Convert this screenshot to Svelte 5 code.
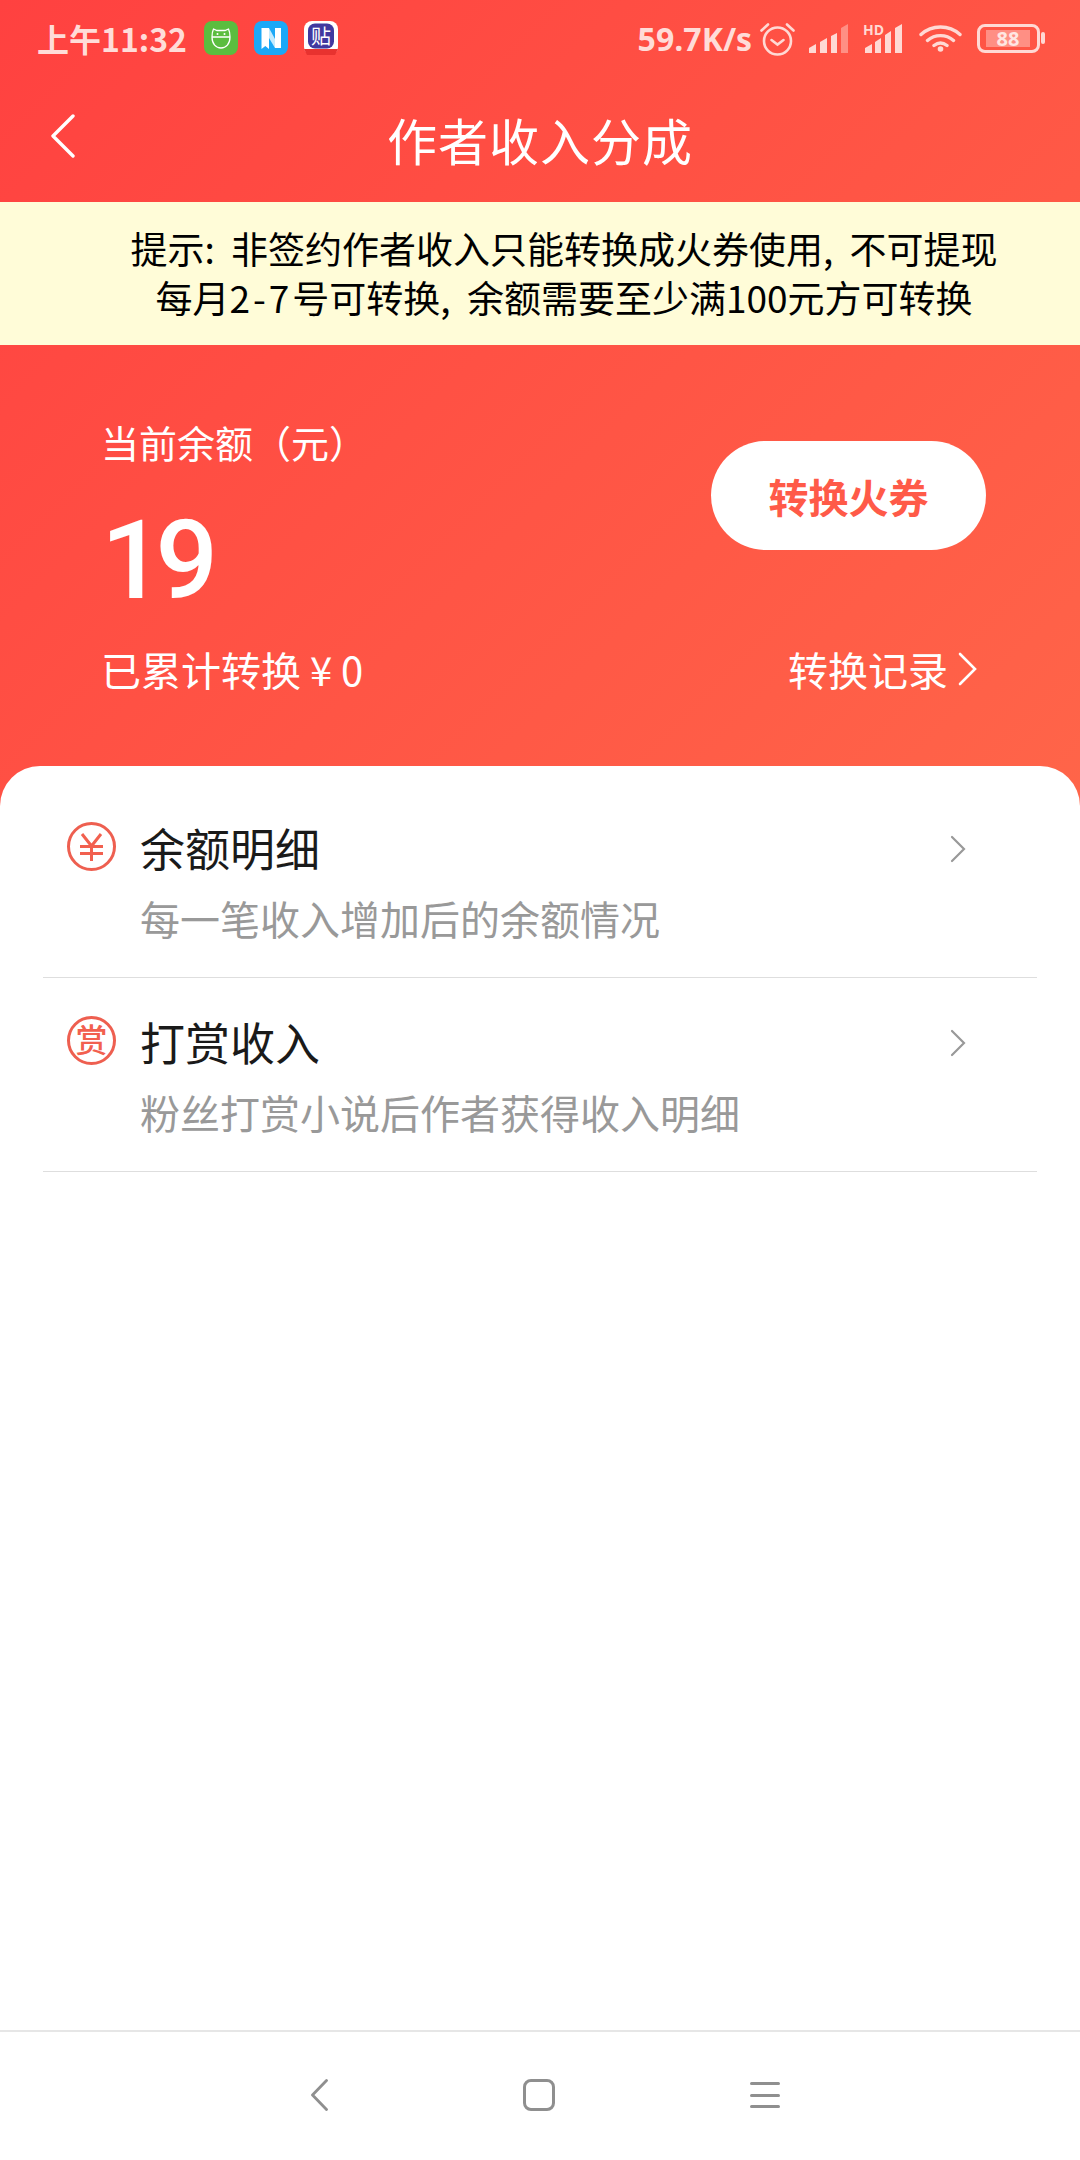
<script>
  const rows = [
    { title: '余额明细', sub: '每一笔收入增加后的余额情况', kind: 'yuan' },
    { title: '打赏收入', sub: '粉丝打赏小说后作者获得收入明细', kind: 'reward' }
  ];
</script>

<div class="page">
  <div class="top">
    <div class="status">
      <div class="status-left">
        <span class="time">上午11:32</span>
        <svg class="app-icon" viewBox="0 0 34 34">
          <rect width="34" height="34" rx="8" fill="#5bbd3f" />
          <path d="M8 16h18M8 16c0 7 4 11 9 11s9-4 9-11c0-3-.5-6-1.500-8l-3.500 1.500h-8L9.500 8C8.500 10 8 13 8 16z" fill="none" stroke="#fff" stroke-width="1.300" />
          <circle cx="13.500" cy="13" r="1" fill="#fff" />
          <circle cx="20.500" cy="13" r="1" fill="#fff" />
        </svg>
        <svg class="app-icon" viewBox="0 0 34 34">
          <rect width="34" height="34" rx="8" fill="#1ba8f7" />
          <path d="M15 7l6 11v9l-6-10z" fill="#c4eafd" />
          <path d="M7.500 7H15v21l-3.700-3-3.800 3z" fill="#fff" />
          <path d="M21 7h6v20h-6z" fill="#fff" />
        </svg>
        <svg class="app-icon" viewBox="0 0 34 34">
          <rect width="34" height="34" rx="8" fill="#fff" />
          <rect x="4" y="2.500" width="26" height="25" rx="7" fill="#41389f" />
          <path d="M0 28h34l-3 6H3z" fill="#e8322f" />
          <text x="17" y="22.500" text-anchor="middle" class="tie">贴</text>
        </svg>
      </div>
      <div class="status-right">
        <span class="speed">59.7K/s</span>
        <svg class="alarm" viewBox="0 0 35 35">
          <circle cx="17.500" cy="20" r="13.500" fill="none" stroke="#ffd9d4" stroke-width="2.600" />
          <path d="M11.500 19l6 4.500 6-4.500M1.500 9.500L8 3.500M33.500 9.500L27 3.500" fill="none" stroke="#ffd9d4" stroke-width="2.600" stroke-linecap="round" />
        </svg>
        <svg class="signal" viewBox="0 0 40 30">
          <path d="M0 30v-5l7-4v9zM11 30V19l7-4v15zM22 30V13l6-3v20z" fill="#ffd9d4" />
          <path d="M32 30V5l7-4v29z" fill="#ff8f84" />
        </svg>
        <svg class="signal hd" viewBox="0 0 40 30">
          <path d="M2 30v-5l7-4v9zM12 30V19l6-4v15zM22 30V12l6-4v22zM32 30V5l7-4v29z" fill="#ffd9d4" />
          <text x="0" y="12" class="hd-text">HD</text>
        </svg>
        <svg class="wifi" viewBox="0 0 43 28">
          <path d="M2 10.500c11-10 28-10 39 0M8.500 16.500c7.500-6.500 18.500-6.500 26 0M15 21.500c4-3 9-3 13 0" fill="none" stroke="#ffd9d4" stroke-width="3.400" stroke-linecap="round" />
          <circle cx="21.500" cy="25" r="2.800" fill="#ffd9d4" />
        </svg>
        <div class="battery">
          <div class="battery-body"><span class="battery-fill">88</span></div>
          <span class="nub"></span>
        </div>
      </div>
    </div>

    <div class="nav">
      <svg class="back" viewBox="0 0 24 44">
        <path d="M22 2L2 22l20 20" fill="none" stroke="#fff" stroke-width="3.400" stroke-linecap="round" stroke-linejoin="round" />
      </svg>
      <h1>作者收入分成</h1>
    </div>

    <div class="banner">
      <p>提示: 非签约作者收入只能转换成火券使用, 不可提现</p>
      <p>每月<span class="digits">2-7</span>号可转换, 余额需要至少满100元方可转换</p>
    </div>

    <div class="hero">
      <div class="hero-main">
        <div>
          <div class="label">当前余额（元）</div>
          <div class="amount">19</div>
        </div>
        <button class="convert">转换火券</button>
      </div>
      <div class="hero-foot">
        <span>已累计转换 ¥ 0</span>
        <span class="record">
          转换记录
          <svg viewBox="0 0 20 34"><path d="M2 2l15 15L2 32" fill="none" stroke="#fff" stroke-width="2.600" stroke-linecap="round" /></svg>
        </span>
      </div>
    </div>
  </div>

  <div class="sheet">
    {#each rows as row}
      <div class="row">
        <div class="row-icon">
          {#if row.kind === 'yuan'}
            <svg viewBox="0 0 49 49">
              <circle cx="24.500" cy="24.500" r="23" fill="none" stroke="#ee5f50" stroke-width="3" />
              <path d="M15 12l9.500 12L34 12M13 24.500h23M13 31.500h23M24.500 24v15" fill="none" stroke="#f2604f" stroke-width="3" />
            </svg>
          {:else}
            <svg viewBox="0 0 49 49">
              <circle cx="24.500" cy="24.500" r="23" fill="none" stroke="#ee5f50" stroke-width="3" />
              <text x="24.500" y="36" text-anchor="middle" class="reward">赏</text>
            </svg>
          {/if}
        </div>
        <div class="row-text">
          <div class="row-title">{row.title}</div>
          <div class="row-sub">{row.sub}</div>
        </div>
        <svg class="row-arrow" viewBox="0 0 16 28">
          <path d="M2 2l12 12L2 26" fill="none" stroke="#999" stroke-width="2.200" stroke-linecap="round" />
        </svg>
      </div>
    {/each}
  </div>

  <div class="navbar">
    <svg class="nb-back" viewBox="0 0 17 32">
      <path d="M15.500 1.500L1.500 16l14 14.500" fill="none" stroke="#8f8f8f" stroke-width="2.800" stroke-linecap="round" stroke-linejoin="round" />
    </svg>
    <span class="nb-home"></span>
    <div class="nb-menu"><span></span><span></span><span></span></div>
  </div>
</div>

<style>
  :global(body) {
    margin: 0;
    background: #fff;
  }

  .page {
    width: 1080px;
    height: 2160px;
    display: flex;
    flex-direction: column;
    font-family: "Noto Sans CJK SC", "Noto Sans", sans-serif;
    overflow: hidden;
  }

  .top {
    background: linear-gradient(135deg, #ff4140 0%, #ff6549 100%);
    padding-bottom: 40px;
    color: #fff;
  }

  .status {
    height: 76px;
    display: flex;
    justify-content: space-between;
    align-items: center;
    padding: 0 35px 0 37px;
    color: #ffdcd8;
  }

  .status-left,
  .status-right {
    display: flex;
    align-items: center;
  }

  .time {
    font-size: 32px;
    font-weight: 700;
    width: 167px;
    white-space: nowrap;
  }

  .app-icon {
    width: 34px;
    height: 34px;
    margin-right: 16px;
  }

  .tie {
    font-size: 20px;
    fill: #fff;
    font-family: "Noto Sans CJK SC", sans-serif;
  }

  .speed {
    font-family: "Open Sans", sans-serif;
    font-size: 32px;
    font-weight: 700;
    margin-right: 8px;
  }

  .alarm {
    width: 35px;
    height: 35px;
    margin-right: 14px;
  }

  .signal {
    width: 40px;
    height: 30px;
    margin-right: 14px;
  }

  .signal.hd {
    margin-right: 16px;
    overflow: visible;
  }

  .hd-text {
    font-family: "Open Sans", sans-serif;
    font-size: 14px;
    font-weight: 700;
    fill: #ffd9d4;
  }

  .wifi {
    width: 43px;
    height: 28px;
    margin-right: 15px;
  }

  .battery {
    display: flex;
    align-items: center;
  }

  .battery-body {
    width: 63px;
    height: 29px;
    box-sizing: border-box;
    border: 3px solid #ffd9d4;
    border-radius: 8px;
    padding: 3px 6px;
    display: flex;
  }

  .battery-fill {
    width: 44px;
    background: #ff8f84;
    color: #ffe6e2;
    font-family: "Open Sans", sans-serif;
    font-size: 20px;
    font-weight: 700;
    line-height: 17px;
    text-align: center;
  }

  .nub {
    width: 4px;
    height: 12px;
    background: #ffd9d4;
    border-radius: 2px;
    margin-left: 1px;
  }

  .nav {
    height: 126px;
    display: grid;
    grid-template-columns: 1fr auto 1fr;
    align-items: center;
  }

  .back {
    width: 24px;
    height: 44px;
    margin: 0 0 6px 51px;
  }

  h1 {
    margin: 0;
    font-size: 50px;
    font-weight: 400;
    letter-spacing: 1px;
    line-height: 60px;
  }

  .banner {
    height: 143px;
    box-sizing: border-box;
    padding: 22px 0 0 48px;
    background: #fffcd8;
    color: #000;
    font-size: 37px;
    line-height: 49px;
    text-align: center;
    word-spacing: 8px;
  }

  .banner p {
    margin: 0;
  }

  .digits {
    letter-spacing: 3px;
  }

  .hero {
    padding: 72px 102px 72px 101px;
  }

  .hero-main {
    display: flex;
    justify-content: space-between;
    align-items: flex-start;
  }

  .label {
    font-size: 38px;
    line-height: 50px;
  }

  .amount {
    font-family: Roboto, sans-serif;
    font-weight: 500;
    font-size: 110px;
    line-height: 120px;
    margin: 34px 0 23px;
    letter-spacing: -8px;
  }

  .convert {
    width: 275px;
    height: 109px;
    margin: 24px -8px 0 0;
    border: 0;
    border-radius: 55px;
    background: #fff;
    color: #ff5a48;
    font-family: inherit;
    font-size: 40px;
    font-weight: 700;
    padding: 0;
  }

  .hero-foot {
    display: flex;
    justify-content: space-between;
    align-items: center;
    font-size: 40px;
    line-height: 50px;
  }

  .record {
    display: flex;
    align-items: center;
    gap: 10px;
  }

  .record svg {
    width: 20px;
    height: 34px;
  }

  .sheet {
    flex: 1;
    margin-top: -40px;
    padding: 18px 43px 0;
    background: #fff;
    border-radius: 40px 40px 0 0;
    position: relative;
  }

  .row {
    height: 194px;
    box-sizing: border-box;
    border-bottom: 1px solid #dedede;
    padding: 34px 71px 0 24px;
    display: flex;
    align-items: flex-start;
  }

  .row-icon {
    width: 49px;
    height: 49px;
    margin: 4px 24px 0 0;
  }

  .row-icon svg {
    display: block;
  }

  .reward {
    font-size: 32px;
    fill: #f2604f;
    font-weight: 500;
    font-family: "Noto Sans CJK SC", sans-serif;
  }

  .row-text {
    flex: 1;
  }

  .row-title {
    font-size: 45px;
    line-height: 60px;
    color: #1a1a1a;
  }

  .row-sub {
    font-size: 40px;
    line-height: 50px;
    margin-top: 15px;
    color: #999;
  }

  .row-arrow {
    width: 16px;
    height: 28px;
    margin-top: 17px;
  }

  .navbar {
    height: 130px;
    box-sizing: border-box;
    border-top: 2px solid #e6e6e6;
    padding: 47px 0 0 11px;
    display: flex;
    justify-content: center;
    align-items: flex-start;
    gap: 195px;
  }

  .nb-back {
    width: 17px;
    height: 32px;
  }

  .nb-home {
    width: 32px;
    height: 32px;
    box-sizing: border-box;
    border: 3px solid #8f8f8f;
    border-radius: 8px;
  }

  .nb-menu {
    width: 30px;
    height: 32px;
    display: flex;
    flex-direction: column;
    justify-content: space-between;
    padding: 3px 0;
    box-sizing: border-box;
  }

  .nb-menu span {
    height: 3px;
    background: #8f8f8f;
    border-radius: 2px;
  }
</style>
